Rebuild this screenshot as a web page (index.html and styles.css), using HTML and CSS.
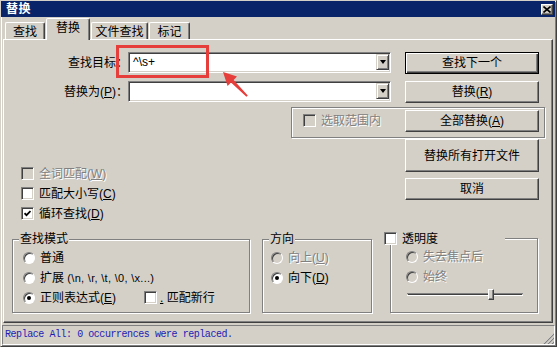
FILE: index.html
```html
<!DOCTYPE html>
<html lang="zh-CN">
<head>
  <meta charset="utf-8">
  <meta name="viewport" content="width=device-width, initial-scale=1">
  <title>替换</title>
  <link rel="stylesheet" href="styles.css">
</head>
<body>
  <div class="window">
    <div class="titlebar">
      <span class="title">替换</span>
      <span class="close-btn">
        <svg width="8" height="7" viewBox="0 0 8 7"><path d="M0.5 0.5l7 6M7.5 0.5l-7 6" stroke="#000" stroke-width="1.6" fill="none"/></svg>
      </span>
    </div>

    <div class="tabs">
      <span class="tab tab-find">查找</span>
      <span class="tab tab-active">替换</span>
      <span class="tab tab-files">文件查找</span>
      <span class="tab tab-mark">标记</span>
    </div>

    <div class="panel">
      <div class="top">
        <div class="form">
          <div class="field">
            <label class="field-label">查找目标：</label>
            <div class="combo">
              <span class="combo-text">^\s+</span>
              <span class="combo-btn"><span class="arrow-down"></span></span>
            </div>
          </div>
          <div class="field field-second">
            <label class="field-label">替换为(<u>P</u>)：</label>
            <div class="combo">
              <span class="combo-text"></span>
              <span class="combo-btn"><span class="arrow-down"></span></span>
            </div>
          </div>
          <div class="scope-frame">
            <span class="check disabled"><span class="box"></span><span>选取范围内</span></span>
          </div>
          <div class="options">
            <span class="check disabled"><span class="box"></span><span>全词匹配(<u>W</u>)</span></span>
            <span class="check"><span class="box"></span><span>匹配大小写(<u>C</u>)</span></span>
            <span class="check">
              <span class="box"><svg width="7" height="7" viewBox="0 0 7 7"><path d="M0.5 3.2l2 2 4-4.2" stroke="#000" stroke-width="1.8" fill="none"/></svg></span><span>循环查找(<u>D</u>)</span>
            </span>
          </div>
        </div>

        <div class="actions">
          <button class="btn btn-default">查找下一个</button>
          <button class="btn">替换(<u>R</u>)</button>
          <button class="btn">全部替换(<u>A</u>)</button>
          <button class="btn btn-tall">替换所有打开文件</button>
          <button class="btn btn-cancel">取消</button>
        </div>
      </div>

      <div class="groups">
        <fieldset class="group group-mode">
          <legend>查找模式</legend>
          <div class="radios">
            <span class="radio"><span class="dot"></span><span>普通</span></span>
            <span class="radio"><span class="dot"></span><span>扩展 <span class="escapes">(\n, \r, \t, \0, \x...)</span></span></span>
            <div class="radio-row">
              <span class="radio radio-regex"><span class="dot on"></span><span>正则表达式(<u>E</u>)</span></span>
              <span class="check check-newline"><span class="box"></span><span><u>.</u> 匹配新行</span></span>
            </div>
          </div>
        </fieldset>

        <fieldset class="group group-dir">
          <legend>方向</legend>
          <div class="radios">
            <span class="radio disabled"><span class="dot"></span><span>向上(<u>U</u>)</span></span>
            <span class="radio"><span class="dot on"></span><span>向下(<u>D</u>)</span></span>
          </div>
        </fieldset>

        <fieldset class="group group-alpha">
          <legend><span class="check"><span class="box"></span><span>透明度</span></span></legend>
          <div class="radios">
            <span class="radio disabled"><span class="dot"></span><span>失去焦点后</span></span>
            <span class="radio disabled"><span class="dot"></span><span>始终</span></span>
          </div>
          <div class="slider"><span class="thumb"></span></div>
        </fieldset>
      </div>
    </div>

    <div class="statusbar">
      <span class="status-text">Replace All: 0 occurrences were replaced.</span>
      <svg class="grip" width="11" height="11" viewBox="0 0 11 11">
        <path d="M10 1L1 10M10 5L5 10M10 9L9 10" stroke="#fff" fill="none"/>
        <path d="M11 1L1 11M11 5L5 11M11 9L9 11" stroke="#808080" stroke-width="1.2" fill="none"/>
      </svg>
    </div>

    <!-- 스크린샷 위 빨간 표시 -->
    <div class="mark-box"></div>
    <svg class="mark-arrow" width="32" height="32" viewBox="0 0 32 32">
      <polygon points="4,4 18,8.6 14.6,12 28.8,27.4 27.4,28.8 12,14.6 8.6,18" fill="#e63e3a"/>
    </svg>
  </div>
</body>
</html>
```

FILE: styles.css
```css
* {
  box-sizing: border-box;
}

body {
  margin: 0;
  background: #d4d0c8;
  font: 12px/14px "Liberation Sans", "Noto Sans CJK SC", sans-serif;
  color: #000;
  text-autospace: no-autospace;
}

u {
  text-decoration: underline;
}

.window {
  position: relative; /* 빨간 표시 기준 */
  width: 557px;
  height: 347px;
  border: 1px solid;
  border-color: #d4d0c8 #404040 #404040 #d4d0c8;
  box-shadow: inset 1px 1px #fff, inset -1px -1px #808080;
  padding: 0 1px 1px 0;
  display: flex;
  flex-direction: column;
}

/* 제목 표시줄 */
.titlebar {
  height: 16px;
  background: #0a246a;
  color: #fff;
  display: flex;
  align-items: center;
  justify-content: space-between;
  padding: 0 2px 0 5px;
}
.title {
  font-weight: bold;
  letter-spacing: 0.5px;
}
.close-btn {
  width: 12px;
  height: 11px;
  background: #d4d0c8;
  border: 1px solid;
  border-color: #fff #404040 #404040 #fff;
  box-shadow: inset -1px -1px #808080;
  display: flex;
  align-items: center;
  justify-content: center;
}

/* 탭 */
.tabs {
  height: 22px;
  display: flex;
  align-items: flex-end;
  padding-left: 4px;
}
.tab {
  height: 17px;
  border: 1px solid;
  border-bottom: none;
  border-color: #fff #404040 transparent #fff;
  border-radius: 2px 2px 0 0;
  box-shadow: inset -1px 0 #808080;
  display: flex;
  align-items: center;
  justify-content: center;
  padding-top: 2px;
  margin-left: 1px;
}
.tab-find { width: 40px; margin-left: 0; }
.tab-active {
  width: 44px;
  height: 22px;
  margin-bottom: -1px;
  padding-top: 0;
  padding-bottom: 3px;
  position: relative;
  z-index: 1;
  background: #d4d0c8;
}
.tab-files { width: 57px; }
.tab-mark { width: 41px; }

.panel {
  height: 284px;
  margin: 0 2px 0 2px;
  border: 1px solid;
  border-color: #fff #404040 #404040 #fff;
  box-shadow: inset -1px -1px #808080;
}

/* 위쪽: 입력 + 버튼 */
.top {
  display: flex;
}
.form {
  width: 401px;
}
.field {
  display: flex;
  align-items: center;
  height: 21px;
  margin-top: 12px;
}
.field-second {
  margin-top: 8px;
}
.field-label {
  width: 124px;
  text-align: right;
}
.combo {
  width: 263px;
  height: 21px;
  background: #fff;
  border: 1px solid;
  border-color: #808080 #fff #fff #808080;
  box-shadow: inset 1px 1px #404040, inset -1px -1px #d4d0c8;
  padding-left: 4px;
  display: flex;
  align-items: flex-start;
}
.combo-text {
  flex: 1;
  line-height: 19px;
}
.combo-btn {
  width: 13px;
  height: 16px;
  margin: 1px 1px 0 0;
  background: #d4d0c8;
  border: 1px solid;
  border-color: #d4d0c8 #404040 #404040 #d4d0c8;
  box-shadow: inset 1px 1px #fff, inset -1px -1px #808080;
  display: flex;
  align-items: center;
  justify-content: center;
}
.arrow-down {
  width: 0;
  height: 0;
  border-left: 3.5px solid transparent;
  border-right: 3.5px solid transparent;
  border-top: 4px solid #000;
}

.scope-frame {
  width: 254px;
  height: 31px;
  margin: 5px 0 0 287px;
  border: 1px solid #808080;
  box-shadow: 1px 1px #fff, inset 1px 1px #fff;
  padding: 6px 0 0 11px;
}

.options {
  margin-top: 29px;
  padding-left: 17px;
  display: flex;
  flex-direction: column;
  gap: 7px;
}

/* 체크박스 */
.check {
  display: flex;
  align-items: center;
  height: 13px;
  gap: 5px;
  white-space: nowrap;
}
.box {
  width: 13px;
  height: 13px;
  flex: none;
  background: #fff;
  border: 1px solid;
  border-color: #808080 #fff #fff #808080;
  box-shadow: inset 1px 1px #404040, inset -1px -1px #d4d0c8;
  display: flex;
  align-items: center;
  justify-content: center;
}
.disabled {
  color: #808080;
  text-shadow: 1px 1px #fff;
}
.disabled .box,
.disabled .dot {
  background: #d4d0c8;
}

/* 오른쪽 버튼 */
.actions {
  width: 134px;
  padding-top: 12px;
  display: flex;
  flex-direction: column;
  gap: 7px;
}
.btn {
  height: 22px;
  font: inherit;
  color: #000;
  background: #d4d0c8;
  border: 1px solid;
  border-color: #fff #404040 #404040 #fff;
  box-shadow: inset -1px -1px #808080;
  padding: 0;
}
.btn-default {
  border-color: #000;
  box-shadow: inset 1px 1px #fff, inset -1px -1px #404040, inset -2px -2px #808080;
}
.btn-tall {
  height: 33px;
}
.btn-cancel {
  margin-top: -1px;
}

/* 아래 그룹 */
.groups {
  display: flex;
  align-items: flex-start;
  margin-top: 12px;
}
.group {
  margin: 0;
  padding: 0;
  min-width: 0;
  height: 81px;
  border: 1px solid #808080;
  box-shadow: 1px 1px #fff, inset 1px 1px #fff;
}
.group legend {
  padding: 0 1px;
  line-height: 14px;
  background: #d4d0c8;
}
.group-mode {
  width: 238px;
  margin-left: 8px;
  padding-left: 10px;
}
.group-mode legend {
  margin-left: -4px;
}
.group-dir {
  width: 110px;
  margin-left: 12px;
  padding-left: 8px;
}
.group-dir legend {
  margin-left: -2px;
}
.group-alpha {
  width: 148px;
  margin-left: 18px;
  padding-left: 15px;
}
.group-alpha legend {
  width: 121px;
  margin-left: -22px;
  padding: 0;
}

.radios {
  display: flex;
  flex-direction: column;
  gap: 7px;
  padding-top: 5px;
}
.radio {
  display: flex;
  align-items: center;
  height: 13px;
  gap: 5px;
  white-space: nowrap;
}
.dot {
  width: 12px;
  height: 12px;
  flex: none;
  border-radius: 50%;
  background: #fff;
  border: 1px solid;
  border-color: #808080 #fff #fff #808080;
  box-shadow: inset 1px 1px #404040;
  display: flex;
  align-items: center;
  justify-content: center;
}
.dot.on::after {
  content: "";
  width: 4px;
  height: 4px;
  border-radius: 50%;
  background: #000;
}
.escapes {
  font-size: 11px;
  letter-spacing: 0.3px;
}
.radio-row {
  display: flex;
  align-items: center;
}
.radio-regex {
  width: 121px;
}
.check-newline {
  gap: 3px;
}

.slider {
  width: 116px;
  height: 11px;
  margin: 6px 0 0 1px;
  background:
    linear-gradient(#808080, #808080) 0 4px / 100% 1px no-repeat,
    linear-gradient(#404040, #404040) 1px 5px / calc(100% - 2px) 1px no-repeat,
    linear-gradient(#fff, #fff) 0 6px / 100% 1px no-repeat;
}
.thumb {
  display: block;
  width: 6px;
  height: 11px;
  margin-left: 81px;
  background: #d4d0c8;
  border: 1px solid;
  border-color: #fff #404040 #404040 #fff;
  box-shadow: inset -1px -1px #808080;
}

/* 상태 표시줄 */
.statusbar {
  height: 20px;
  margin: 2px 0 0 1px;
  border: 1px solid;
  border-color: #808080 #fff #fff #808080;
  display: flex;
  align-items: center;
  justify-content: space-between;
  padding-left: 2px;
}
.status-text {
  font: 10px/12px "Liberation Mono", monospace;
  letter-spacing: -0.45px;
  color: #1c1cb4;
}
.grip {
  align-self: flex-end;
}

/* 빨간 표시 (덧그림) */
.mark-box {
  position: absolute;
  left: 115px;
  top: 44px;
  width: 93px;
  height: 33px;
  border: 3px solid #e63e3a;
}
.mark-arrow {
  position: absolute;
  left: 218px;
  top: 67px;
}
```
